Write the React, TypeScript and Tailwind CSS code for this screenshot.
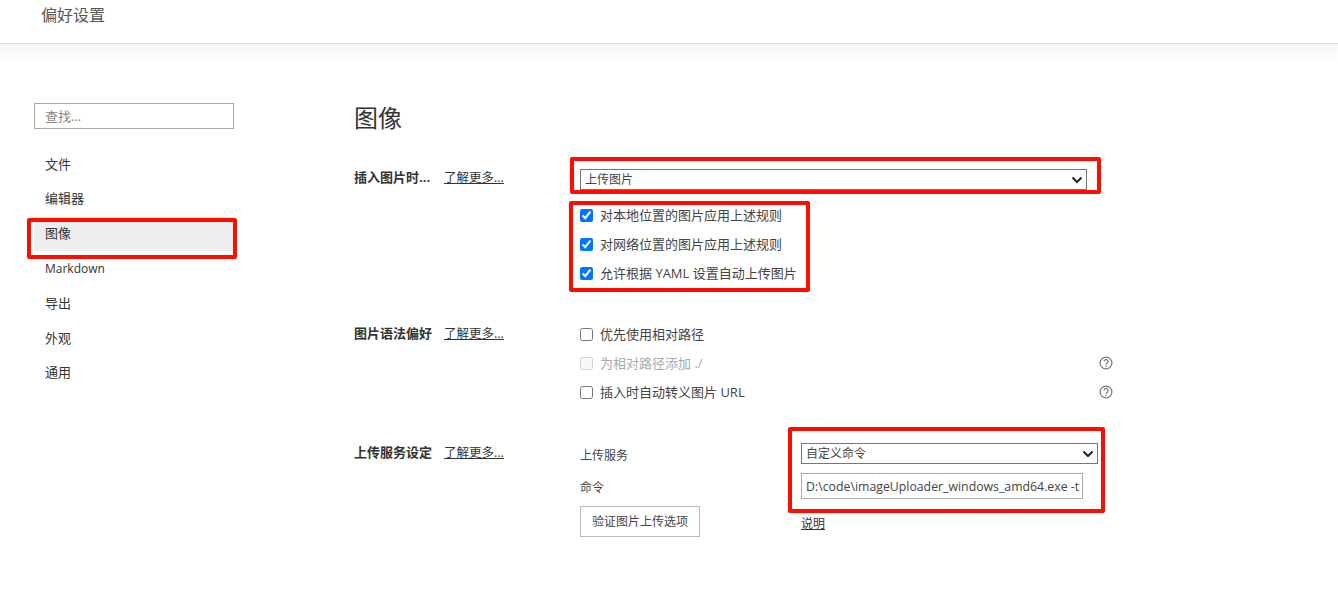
import React from "react";

const FONT = "font-['Open_Sans','Noto_Sans_CJK_SC',sans-serif]";

function Help() {
  return (
    <svg width="14" height="14" viewBox="0 0 14 14" fill="none" className="block text-[#777]">
      <circle cx="7" cy="7" r="5.9" stroke="currentColor" strokeWidth="1.2" />
      <path d="M5.1 5.5a1.95 1.95 0 1 1 3 1.65c-.7.45-1.1.8-1.1 1.6" stroke="currentColor" strokeWidth="1.2" fill="none" />
      <circle cx="7" cy="10.3" r=".75" fill="currentColor" />
    </svg>
  );
}

function Chevron() {
  return (
    <svg width="12" height="8" viewBox="0 0 12 8" fill="none" className="absolute right-[4px] top-1/2 -translate-y-1/2 text-[#222] pointer-events-none">
      <path d="M1.5 1.5 6 6l4.5-4.5" stroke="currentColor" strokeWidth="2" />
    </svg>
  );
}

function SelectBox({ value, width }: { value: string; width: string }) {
  return (
    <div className={`relative h-[21px] ${width}`}>
      <select
        defaultValue={value}
        className="block appearance-none w-full h-[21px] border border-[#767676] bg-white pl-[4px] py-0 text-[12px] leading-[19px] text-[#444] outline-none rounded-none"
      >
        <option>{value}</option>
      </select>
      <Chevron />
    </div>
  );
}

function Learn() {
  return <a className="mt-[1px] text-[12.5px] leading-[18px] underline text-[#333] whitespace-nowrap">了解更多...</a>;
}

function Check({ label, checked, disabled, help }: { label: string; checked?: boolean; disabled?: boolean; help?: boolean }) {
  return (
    <div className="flex items-center h-[29px] w-[533px]">
      <input type="checkbox" readOnly checked={!!checked} disabled={disabled} className="w-[13px] h-[13px] m-0 mr-[7px] shrink-0" />
      <span className={`text-[13px] ${disabled ? "text-[#aaa]" : "text-[#444]"}`}>{label}</span>
      {help && (
        <span className="ml-auto -mt-[2px]">
          <Help />
        </span>
      )}
    </div>
  );
}

function Section({ title, className, titleClass, children }: { title: string; className?: string; titleClass?: string; children: React.ReactNode }) {
  return (
    <section className={`flex ${className ?? ""}`}>
      <div className={`w-[226px] shrink-0 flex items-start h-[18px] ${titleClass ?? ""}`}>
        <h3 className="w-[90px] text-[13px] leading-[18px] font-bold text-[#333] whitespace-nowrap">{title}</h3>
        <Learn />
      </div>
      <div className="min-w-0">{children}</div>
    </section>
  );
}

const NAV = ["文件", "编辑器", "图像", "Markdown", "导出", "外观", "通用"];

function Red({ className }: { className: string }) {
  return <div className={`absolute border-[4px] border-[#ff0d00] rounded-[2px] pointer-events-none ${className}`} />;
}

export default function App() {
  return (
    <div className={`relative w-[1338px] h-[613px] overflow-hidden bg-white ${FONT}`}>
      <header className="h-[44px] border-b border-[#dcdcdc] pl-[41px] pt-[4px]">
        <h1 className="text-[16px] leading-[22px] font-normal text-[#555]">偏好设置</h1>
      </header>
      <div className="h-[18px] -mb-[18px] bg-gradient-to-b from-[#f6f6f6] to-white" />
      <div className="flex">
        <aside className="w-[320px] pl-[34px] pt-[59px] shrink-0">
          <input
            placeholder="查找..."
            className="block w-[200px] h-[26px] border border-[#aaa] pl-[10px] text-[13px] text-[#333] placeholder:text-[#888] outline-none"
          />
          <nav className="mt-[18px] w-[200px]">
            {NAV.map((n) => (
              <div
                key={n}
                className={`h-[34.8px] pl-[11px] flex items-center text-[#333] ${n === "Markdown" ? "text-[12px] pt-[1px]" : "text-[13px]"} ${n === "图像" ? "bg-[#ededed]" : ""}`}
              >
                {n}
              </div>
            ))}
          </nav>
        </aside>
        <main className="pl-[34px] pt-[54px] min-w-0 flex-1">
          <h2 className="text-[24px] leading-[40px] font-normal text-[#333]">图像</h2>
          <Section title="插入图片时..." className="mt-[30px]">
            <div className="pt-[1px]">
              <SelectBox value="上传图片" width="w-[507px]" />
            </div>
            <div className="mt-[11px]">
              <Check checked label="对本地位置的图片应用上述规则" />
              <Check checked label="对网络位置的图片应用上述规则" />
              <Check checked label="允许根据 YAML 设置自动上传图片" />
            </div>
          </Section>
          <Section title="图片语法偏好" className="mt-[32px]" titleClass="mt-[4px]">
            <Check label="优先使用相对路径" />
            <Check disabled help label="为相对路径添加 ./" />
            <Check help label="插入时自动转义图片 URL" />
          </Section>
          <Section title="上传服务设定" className="mt-[36px]">
            <div className="flex">
              <div className="w-[221px] shrink-0">
                <div className="h-[22px] mt-[2px] flex items-center text-[12px] text-[#444]">上传服务</div>
                <div className="h-[22px] mt-[10px] flex items-center text-[12px] text-[#444]">命令</div>
                <button className="block mt-[7px] w-[120px] h-[31px] border border-[#bbb] text-[12px] text-[#444] bg-white">验证图片上传选项</button>
              </div>
              <div>
                <SelectBox value="自定义命令" width="w-[297px]" />
                <input
                  readOnly
                  value="D:\code\imageUploader_windows_amd64.exe -t"
                  className="block mt-[9px] w-[282px] h-[26px] border border-[#aaa] pl-[4px] pr-[1px] text-[12.3px] text-[#444] outline-none"
                />
                <a className="block mt-[16px] text-[12px] leading-[18px] underline text-[#333]">说明</a>
              </div>
            </div>
          </Section>
        </main>
      </div>
      <Red className="left-[27px] top-[218px] w-[210px] h-[41px]" />
      <Red className="left-[570px] top-[157px] w-[531px] h-[37px]" />
      <Red className="left-[569px] top-[201px] w-[241px] h-[91px]" />
      <Red className="left-[788px] top-[427px] w-[317px] h-[86px]" />
    </div>
  );
}
